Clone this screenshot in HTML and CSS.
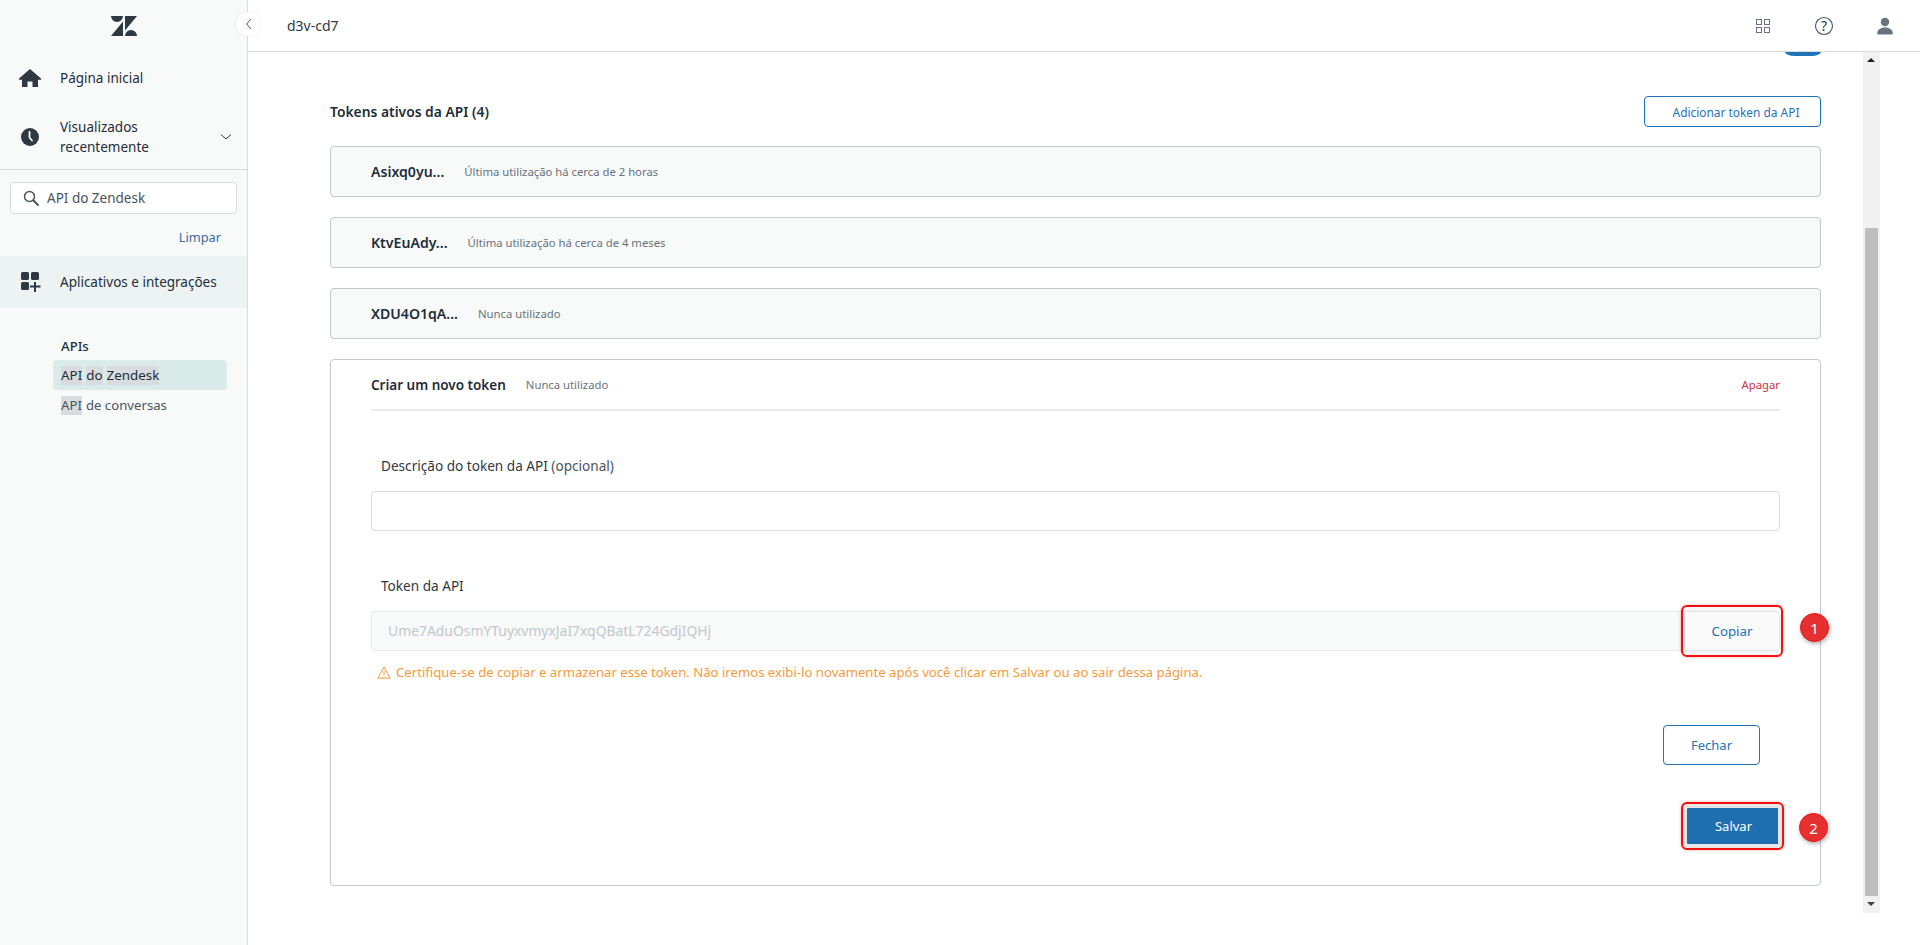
FILE: index.html
```html
<!DOCTYPE html>
<html lang="pt">
<head>
<meta charset="utf-8">
<title>API do Zendesk</title>
<link rel="stylesheet" href="styles.css">
</head>
<body>
<div class="app">
  <aside class="sidebar">
    <div class="logo">
      <svg width="26" height="20" viewBox="0 0 26 20"><path fill="#2f3941" d="M12 5.5V20H0zM12 0a6 6 0 0 1-12 0zM14 20a6 6 0 0 1 12 0zM14 0v14.5L26 0z"/></svg>
    </div>
    <a class="nav home">
      <svg class="nav-icon" width="24" height="20" viewBox="0 0 24 20"><path fill="#2f3941" d="M12 1 1 10.6c-.5.5-.2 1.2.4 1.2H4V19h5.5v-5.5h5V19H20v-7.2h2.600c.6 0 .9-.7.4-1.2z"/></svg>
      <span>Página inicial</span>
    </a>
    <a class="nav recent">
      <svg class="nav-icon" width="24" height="20" viewBox="0 0 24 20"><circle cx="12" cy="10" r="9" fill="#2f3941"/><path fill="none" stroke="#f8f9f9" stroke-width="1.800" stroke-linecap="round" d="M11.500 5v5.500l2.500 3"/></svg>
      <span class="grow">Visualizados<br>recentemente</span>
      <svg class="chev" width="12" height="8" viewBox="0 0 12 8"><path fill="none" stroke="#2f3941" d="M1 1.500 6 6l5-4.500"/></svg>
    </a>
    <div class="search-area">
      <div class="search">
        <svg width="16" height="16" viewBox="0 0 16 16"><circle cx="6.500" cy="6.500" r="5" fill="none" stroke="#49545c" stroke-width="1.500"/><path stroke="#49545c" stroke-width="2" stroke-linecap="round" d="m10.500 10.500 4.500 4.500"/></svg>
        <span>API do Zendesk</span>
      </div>
      <div class="clear">Limpar</div>
    </div>
    <a class="nav apps">
      <svg class="nav-icon" width="24" height="20" viewBox="0 0 24 20"><g fill="#2f3941"><rect x="3" y="0" width="8" height="8" rx="1.500"/><rect x="13" y="0" width="8" height="8" rx="1.500"/><rect x="3" y="10" width="8" height="8" rx="1.500"/><path d="M16 10h2v3.500h4.500v2H18V20h-2v-4.500h-4v-2h4z"/></g></svg>
      <span>Aplicativos e integrações</span>
    </a>
    <div class="subnav">
      <div class="sub-title">APIs</div>
      <div class="sub-item active"><mark>API</mark> <mark>do</mark> <mark>Zendesk</mark></div>
      <div class="sub-item"><mark>API</mark> de conversas</div>
    </div>
    <button class="collapse" aria-label="Recolher">
      <svg width="7" height="12" viewBox="0 0 7 12"><path fill="none" stroke="#49545c" d="M6 1 1.500 6 6 11"/></svg>
    </button>
  </aside>

  <div class="main">
    <header class="topbar">
      <div class="account">d3v-cd7</div>
      <div class="top-icons">
        <svg width="16" height="16" viewBox="0 0 16 16"><g fill="none" stroke="#68737d"><rect x="1.500" y="1.500" width="5" height="5"/><rect x="9.500" y="1.500" width="5" height="5"/><rect x="1.500" y="9.500" width="5" height="5"/><rect x="9.500" y="9.500" width="5" height="5"/></g></svg>
        <svg width="20" height="20" viewBox="0 0 20 20"><circle cx="10" cy="10" r="8.500" fill="none" stroke="#49545c" stroke-width="1.100"/><text x="10" y="14.500" text-anchor="middle" class="q">?</text></svg>
        <svg width="16" height="18" viewBox="0 0 16 18"><circle cx="8" cy="5" r="4.200" fill="#68737d"/><path fill="#68737d" d="M1 17.500c-.4 0-.8-.3-.8-.8 0-3.700 3-6.200 7.800-6.200s7.800 2.500 7.800 6.200c0 .5-.4.800-.8.800z"/></svg>
      </div>
    </header>

    <div class="body">
      <main class="content">
        <div class="peek"></div>
        <div class="title-row">
          <h2>Tokens ativos da API (4)</h2>
          <button class="btn add">Adicionar token da API</button>
        </div>
        <div class="token-row"><b>Asixq0yu...</b><span>Última utilização há cerca de 2 horas</span></div>
        <div class="token-row"><b>KtvEuAdy...</b><span>Última utilização há cerca de 4 meses</span></div>
        <div class="token-row"><b>XDU4O1qA...</b><span>Nunca utilizado</span></div>

        <section class="card">
          <div class="card-head">
            <b>Criar um novo token</b><span class="used">Nunca utilizado</span>
            <a class="delete">Apagar</a>
          </div>
          <label class="field-label first">Descrição do token da API <em>(opcional)</em></label>
          <div class="input"></div>
          <label class="field-label second">Token da API</label>
          <div class="token-group">
            <div class="input disabled">Ume7AduOsmYTuyxvmyxJaI7xqQBatL724GdjIQHj</div>
            <div class="copy">Copiar
              <i class="hl hl-copy"></i>
              <i class="badge badge-copy">1</i>
            </div>
          </div>
          <div class="warning">
            <svg width="14" height="13" viewBox="0 0 14 13"><path fill="none" stroke="#f79a3e" stroke-linejoin="round" d="M7 1 .8 12.200h12.400zM7 5v4M7 10v1"/></svg>
            <span>Certifique-se de copiar e armazenar esse token. Não iremos exibi-lo novamente após você clicar em Salvar ou ao sair dessa página.</span>
          </div>
          <div class="actions">
            <button class="btn close">Fechar</button>
            <div class="save">Salvar
              <i class="hl hl-save"></i>
              <i class="badge badge-save">2</i>
            </div>
          </div>
        </section>
      </main>
      <div class="scrollbar">
        <div class="arrow up"></div>
        <div class="thumb"></div>
        <div class="arrow down"></div>
      </div>
      <div class="gutter"></div>
    </div>
  </div>
</div>
</body>
</html>
```
FILE: styles.css
```css
* { box-sizing: border-box; }
html, body { margin: 0; height: 945px; overflow: hidden; background: #fff; }
body { font-family: "Noto Sans", "Open Sans", sans-serif; font-size: 13px; color: #2f3941; }
button { font-family: inherit; }
.app { display: flex; height: 945px; }

.sidebar { position: relative; width: 248px; flex: none; background: #f8f9f9; border-right: 1px solid #d8dcde; }
.logo { height: 52px; display: flex; justify-content: center; padding-top: 16px; }
.nav { display: flex; align-items: center; color: #1f2d3a; font-size: 13.500px; line-height: 20px; }
.nav-icon { flex: none; margin: 0 18px 0 18px; }
.home { height: 52px; }
.recent { height: 66px; border-bottom: 1px solid #d8dcde; padding-bottom: 0; }
.grow { flex: 1; }
.chev { margin-right: 15px; }
.search-area { padding: 12px 10px 0; height: 86px; }
.search { height: 32px; background: #fff; border: 1px solid #d8dcde; border-radius: 4px; display: flex; align-items: center; padding-left: 12px; gap: 8px; font-size: 13.500px; color: #49545c; }
.clear { text-align: right; color: #3b6ba5; padding: 14px 16px 0 0; line-height: 18px; font-size: 12.800px; }
.apps { height: 52px; background: #edf3f3; }
.subnav { padding: 28px 20px 0 53px; font-size: 13.200px; }
.sub-title { padding-left: 8px; line-height: 20px; color: #1f2d3a; margin-bottom: 4px; font-weight: 500; }
.sub-item { padding-left: 8px; height: 30px; line-height: 20px; display: flex; gap: 4px; align-items: center; color: #49545c; }
.sub-item.active { background: #d9ecea; border-radius: 4px; color: #1f2d3a; font-size: 13.400px; }
mark { background: #d8dcde; color: inherit; line-height: 19px; }
.collapse { position: absolute; top: 12px; right: -13px; width: 24px; height: 24px; border-radius: 50%; border: 0; background: #fff; padding: 0; display: flex; align-items: center; justify-content: center; box-shadow: 0 0 3px rgba(47,57,65,.12); z-index: 2; }

.main { flex: 1; min-width: 0; display: flex; flex-direction: column; }
.topbar { height: 52px; flex: none; border-bottom: 1px solid #d8dcde; display: flex; align-items: center; justify-content: space-between; padding-left: 39px; box-shadow: 0 1px 2px rgba(47,57,65,.04); }
.account { font-size: 14px; color: #2f3941; }
.top-icons { display: flex; align-items: center; gap: 43px; padding-right: 27px; }
.q { font: 14px "Noto Sans", sans-serif; fill: #2f3941; }

.body { display: flex; height: 861px; flex: none; }
.content { flex: 1; min-width: 0; padding: 0 42px 0 82px; overflow: hidden; }
.peek { width: 36px; height: 4px; margin-left: auto; background: #1f73b7; border-radius: 0 0 10px 10px / 0 0 4px 4px; }
.title-row { display: flex; justify-content: space-between; align-items: center; margin-top: 40px; margin-bottom: 19px; }
h2 { margin: 0; font-size: 13.850px; font-weight: 600; color: #1f2d3a; }
.btn { background: #fff; border: 1px solid #1f73b7; border-radius: 4px; color: #1f73b7; font-size: 12px; padding: 0; }
.add { width: 177px; height: 31px; padding-left: 7px; font-size: 11.900px; }
.token-row { height: 51px; margin-bottom: 20px; background: #f8f9f9; border: 1px solid #c2c8cc; border-radius: 4px; display: flex; align-items: center; padding-left: 40px; gap: 20px; }
.token-row b { font-size: 14.100px; font-weight: 600; color: #1f2d3a; }
.card-head b { font-size: 13.500px; font-weight: 600; color: #1f2d3a; }
.token-row span, .used { font-size: 11.300px; color: #68737d; }
.card { height: 527px; border: 1px solid #c2c8cc; border-radius: 4px; padding: 0 40px; }
.card-head { height: 51px; border-bottom: 2px solid #e9ebed; display: flex; align-items: center; gap: 20px; }
.delete { margin-left: auto; color: #cc3340; font-size: 11.300px; }
.field-label { display: block; padding-left: 10px; font-size: 13.600px; line-height: 20px; color: #2f3941; }
.field-label em { font-style: normal; color: #49545c; }
.field-label.first { margin-top: 45px; margin-bottom: 15px; }
.field-label.second { margin-top: 45px; margin-bottom: 15px; }
.input { height: 40px; border: 1px solid #d8dcde; border-radius: 4px; background: #fff; }
.token-group { display: flex; }
.input.disabled { flex: 1; background: #f8f9f9; border-color: #e9ebed; color: #c2c8cc; font-size: 13.900px; line-height: 38px; padding-left: 16px; border-radius: 4px 0 0 4px; border-right: 0; }
.copy { position: relative; width: 96px; height: 40px; display: flex; align-items: center; justify-content: center; color: #1f73b7; font-size: 13.300px; background: #fff; border: 1px solid #e9ebed; border-radius: 0 4px 4px 0; box-shadow: -2px 0 4px rgba(0,0,0,.08); }
.warning { display: flex; align-items: center; gap: 5px; margin-top: 12px; padding-left: 6px; height: 18px; color: #f79a3e; font-size: 13.150px; }
.actions { display: flex; flex-direction: column; align-items: flex-end; margin-top: 44px; }
.close { width: 97px; height: 40px; font-size: 13px; margin-right: 20px; }
.save { position: relative; margin-top: 41px; width: 93px; height: 40px; background: #1f6fb0; color: #fff; border-radius: 4px; display: flex; align-items: center; justify-content: center; font-size: 13px; }
.hl { position: absolute; border: 2px solid #f01010; border-radius: 6px; box-shadow: 0 0 3px rgba(240,16,16,.35); pointer-events: none; }
.hl-copy { left: -4px; right: -4px; top: -7px; bottom: -7px; background: rgba(0,0,0,.02); }
.hl-save { left: -6px; right: -4px; top: -4px; bottom: -4px; box-shadow: inset 0 0 0 4px #e6e6e6, 0 0 3px rgba(240,16,16,.35); }
.badge { position: absolute; width: 29px; height: 29px; border-radius: 50%; background: #e5302f; border: 1px solid #f01010; color: #fff; font-style: normal; font-size: 15px; display: flex; align-items: center; justify-content: center; box-shadow: 1px 2px 4px rgba(0,0,0,.3); }
.badge-copy { left: 115px; top: 1px; }
.badge-save { left: 112px; top: 7px; }

.scrollbar { width: 17px; flex: none; background: #f1f1f1; display: flex; flex-direction: column; align-items: center; }
.arrow { height: 17px; flex: none; width: 100%; position: relative; }
.arrow::after { content: ""; position: absolute; left: 4px; border-left: 4px solid transparent; border-right: 4px solid transparent; }
.up::after { top: 6px; border-bottom: 4px solid #202020; }
.down::after { top: 6px; border-top: 4px solid #404040; }
.thumb { flex: 1; width: 13px; margin-top: 159px; background: #bebebe; }
.gutter { width: 40px; flex: none; }
```
